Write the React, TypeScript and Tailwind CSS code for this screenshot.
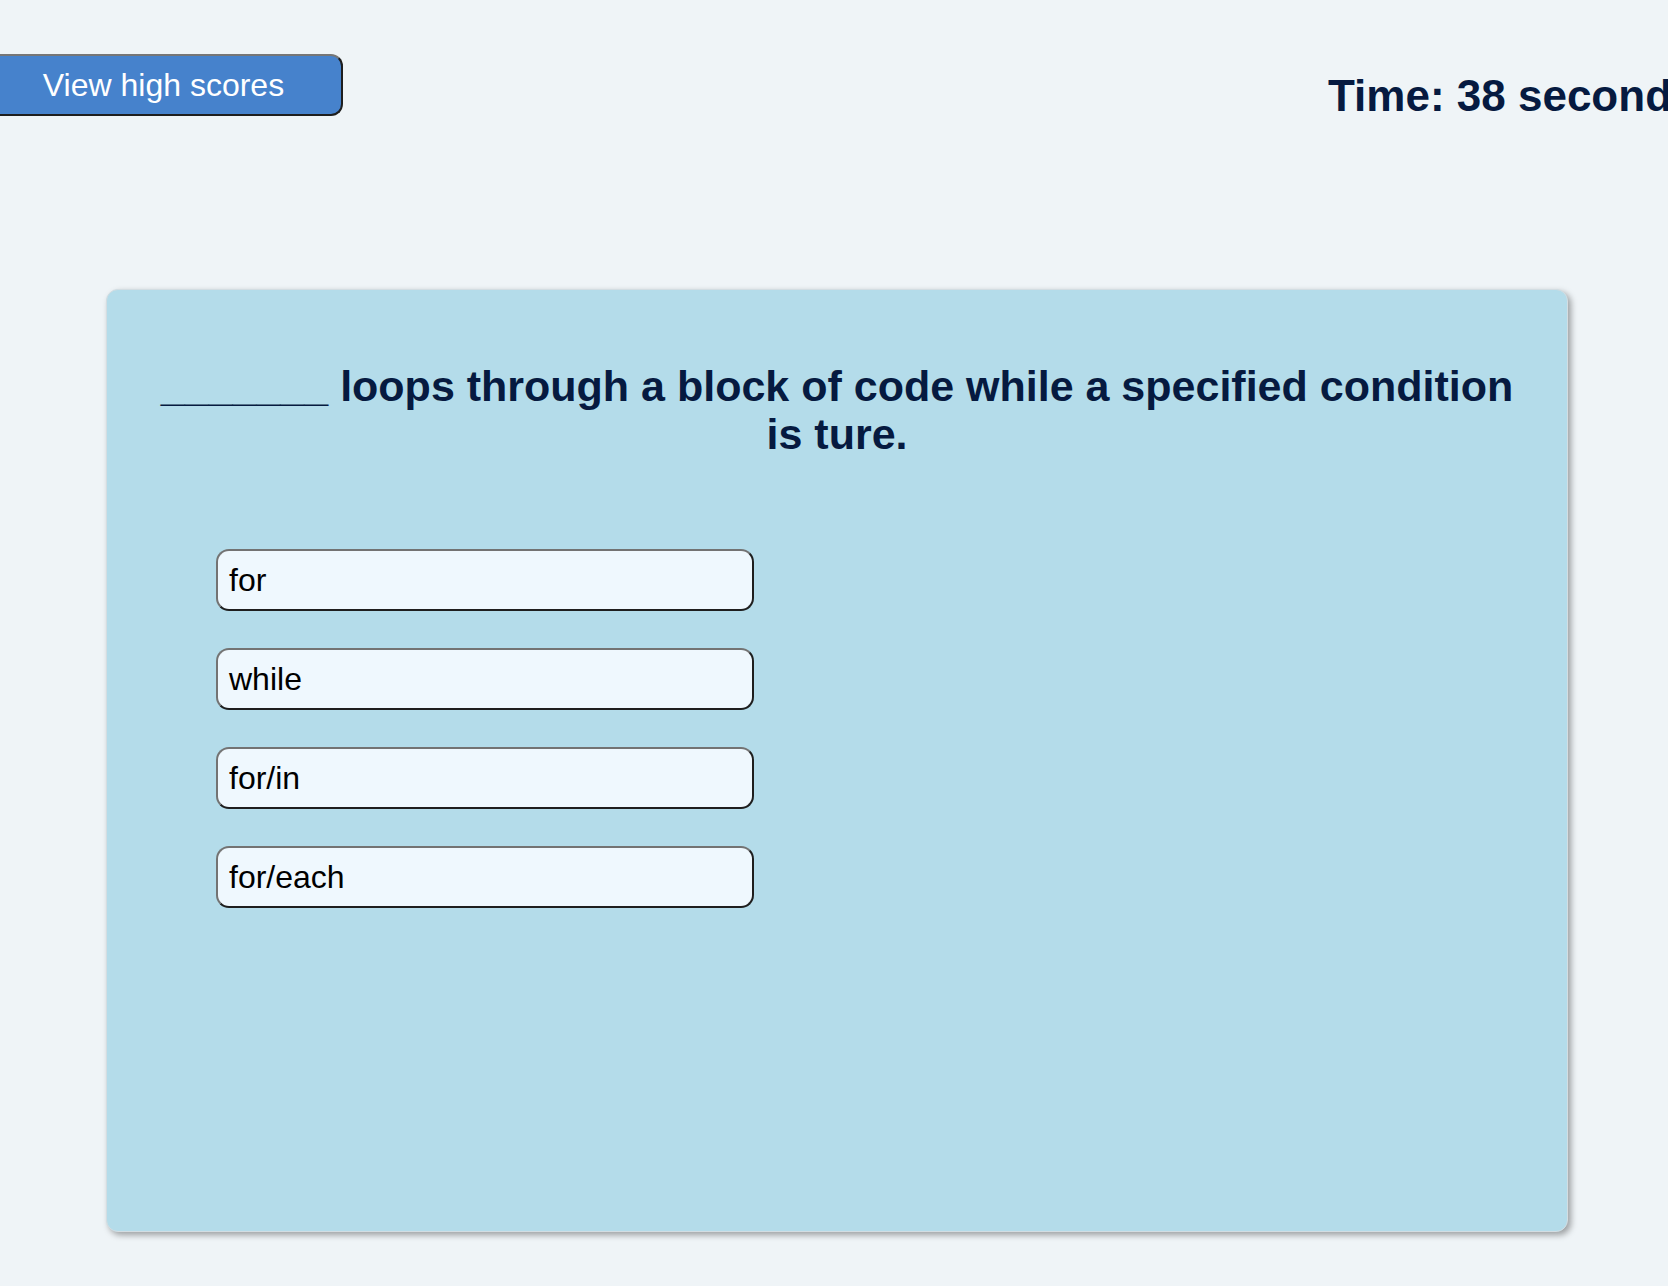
import { useState } from "react";

const CHOICES = ["for", "while", "for/in", "for/each"];

const App = () => {
  const [seconds] = useState(38);

  return (
    <div className="min-h-[1286px] w-full overflow-hidden bg-[#eff4f7] font-['Liberation_Sans',Arial,sans-serif]">
      <header className="flex h-[138px] items-start">
        <button className="mt-[54px] -ml-[16px] h-[62px] w-[359px] shrink-0 rounded-r-[12px] border-[2.5px] border-t-[#767676] border-l-[#767676] border-b-[#1e1e1e] border-r-[#1e1e1e] bg-[#4682cc] text-[32px] leading-none text-white">
          View high scores
        </button>
        <div className="mt-[63px] ml-[985px] shrink-0 whitespace-nowrap text-[44px] font-bold text-[#061a40]">
          Time: {seconds} seconds
        </div>
      </header>

      <main className="ml-[106px] mt-[151px] h-[943px] w-[1462px] rounded-[12px] border border-[#d3dde2] bg-[#b4dcea] shadow-[3px_3px_6px_rgba(0,0,0,0.35)]">
        <h2 className="mx-[40px] mt-[72px] text-center text-[43px] font-bold leading-[48px] text-[#061a40]">
          _______ loops through a block of code while a specified condition is ture.
        </h2>
        <ul className="mt-[91px] ml-[109px] flex flex-col gap-[37px]">
          {CHOICES.map((choice) => (
            <li key={choice}>
              <button className="h-[62px] w-[538px] rounded-[13px] border-[2.5px] border-t-[#737373] border-l-[#737373] border-b-[#1e1e1e] border-r-[#1e1e1e] bg-[#eff8fe] pl-[11px] text-left text-[32px] leading-none text-black">
                {choice}
              </button>
            </li>
          ))}
        </ul>
      </main>
    </div>
  );
};

export default App;
